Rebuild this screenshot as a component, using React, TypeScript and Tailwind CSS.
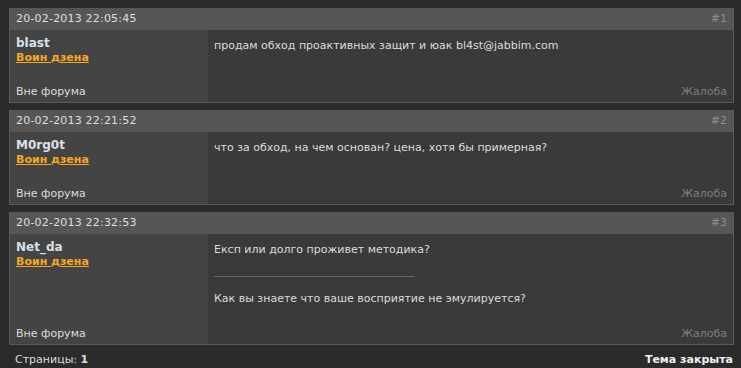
import React from "react";

type Post = {
  date: string;
  num: string;
  user: string;
  h: string;
  body: React.ReactNode;
};

const posts: Post[] = [
  {
    date: "20-02-2013 22:05:45",
    num: "#1",
    user: "blast",
    h: "h-[72px]",
    body: <div>продам обход проактивных защит и юак bl4st@jabbim.com</div>,
  },
  {
    date: "20-02-2013 22:21:52",
    num: "#2",
    user: "M0rg0t",
    h: "h-[72px]",
    body: <div>что за обход, на чем основан? цена, хотя бы примерная?</div>,
  },
  {
    date: "20-02-2013 22:32:53",
    num: "#3",
    user: "Net_da",
    h: "h-[110px]",
    body: (
      <div>
        <div>Експ или долго проживет методика?</div>
        <div className="mt-[17px] mb-[14px] h-px w-[200px] bg-[#6a6a6a]" />
        <div>Как вы знаете что ваше восприятие не эмулируется?</div>
      </div>
    ),
  },
];

export default function App() {
  return (
    <div
      className="w-[741px] h-[368px] overflow-hidden bg-[#2b2b2b] text-[11px] text-[#dcdcdc]"
      style={{ fontFamily: '"DejaVu Sans", Verdana, sans-serif' }}
    >
      <div className="pt-[8px] pl-[9px] pr-[7px] flex flex-col gap-[7px]">
        {posts.map((p) => (
          <div key={p.num} className="border border-t-0 border-[#5b5b5b]">
            <div className="h-[22px] bg-[#565656] flex items-center justify-between pl-[6px] pr-[6px]">
              <span className="text-[#dedede] tracking-[0.2px]">{p.date}</span>
              <span className="text-[#8e8e8e]">{p.num}</span>
            </div>
            <div className={`flex ${p.h}`}>
              <div className="w-[198px] bg-[#444444] flex flex-col justify-between pl-[6px] pt-[6px] pb-[2px]">
                <div className="flex flex-col">
                  <span className="text-[12px] font-bold text-[#d9e0e8] leading-[15px]">{p.user}</span>
                  <span className="font-bold text-[#f7a823] underline leading-[14px]">Воин дзена</span>
                </div>
                <span>Вне форума</span>
              </div>
              <div className="flex-1 bg-[#3a3a3a] flex flex-col justify-between pl-[6px] pr-[6px] pt-[8px] pb-[2px]">
                {p.body}
                <div className="text-right text-[#7d7d7d]">Жалоба</div>
              </div>
            </div>
          </div>
        ))}
      </div>
      <div className="flex justify-between pl-[15px] pr-[8px] pt-[7px]">
        <span>
          Страницы: <b>1</b>
        </span>
        <span className="font-bold text-[#f0f0f0]">Тема закрыта</span>
      </div>
    </div>
  );
}
